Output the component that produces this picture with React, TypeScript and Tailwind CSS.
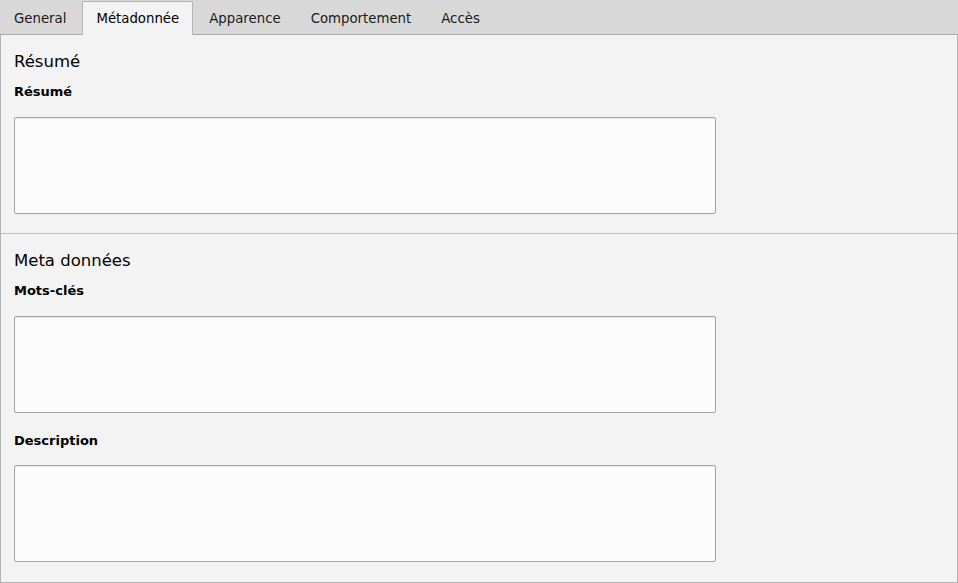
const tabs = ["General", "Métadonnée", "Apparence", "Comportement", "Accès"];

function Field({ label, gap = "mt-[17px]" }: { label: string; gap?: string }) {
  return (
    <div>
      <div className="text-[13px] font-bold leading-4 text-black">{label}</div>
      <textarea
        className={`${gap} block h-[97px] w-[702px] resize-none rounded-[2px] border border-[#a3a3a3] bg-[#fcfcfc] shadow-[inset_0_1px_1px_rgba(0,0,0,0.08)] outline-none`}
      />
    </div>
  );
}

export default function App() {
  return (
    <div
      className="flex h-[583px] w-[958px] flex-col bg-[#f3f3f3] text-black"
      style={{ fontFamily: '"DejaVu Sans", Verdana, sans-serif' }}
    >
      <div className="flex h-[35px] items-end gap-[2px] border-b border-[#ababab] bg-[#d8d8d8]">
        {tabs.map((t, i) =>
          i === 1 ? (
            <div
              key={t}
              className="-mb-px flex h-[34px] items-center rounded-t-[2px] border border-b-0 border-[#b3b3b3] bg-[#f3f3f3] px-[13px] pt-[1px] text-[13.3px]"
            >
              {t}
            </div>
          ) : (
            <div key={t} className="flex h-[34px] items-center border border-transparent px-[13px] pt-[3px] text-[13.3px] text-[#1a1a1a]">
              {t}
            </div>
          )
        )}
      </div>
      <div className="flex flex-1 flex-col border-x border-b border-[#b3b3b3]">
        <section className="border-b border-[#c2c2c2] px-[13px] pt-[15px] pb-[19px]">
          <h2 className="mb-[10px] text-[16.5px] leading-6">Résumé</h2>
          <Field label="Résumé" />
        </section>
        <section className="px-[13px] pt-[15px]">
          <h2 className="mb-[10px] text-[16.5px] leading-6">Meta données</h2>
          <Field label="Mots-clés" />
          <div className="mt-[20px]">
            <Field label="Description" gap="mt-[16px]" />
          </div>
        </section>
      </div>
    </div>
  );
}
